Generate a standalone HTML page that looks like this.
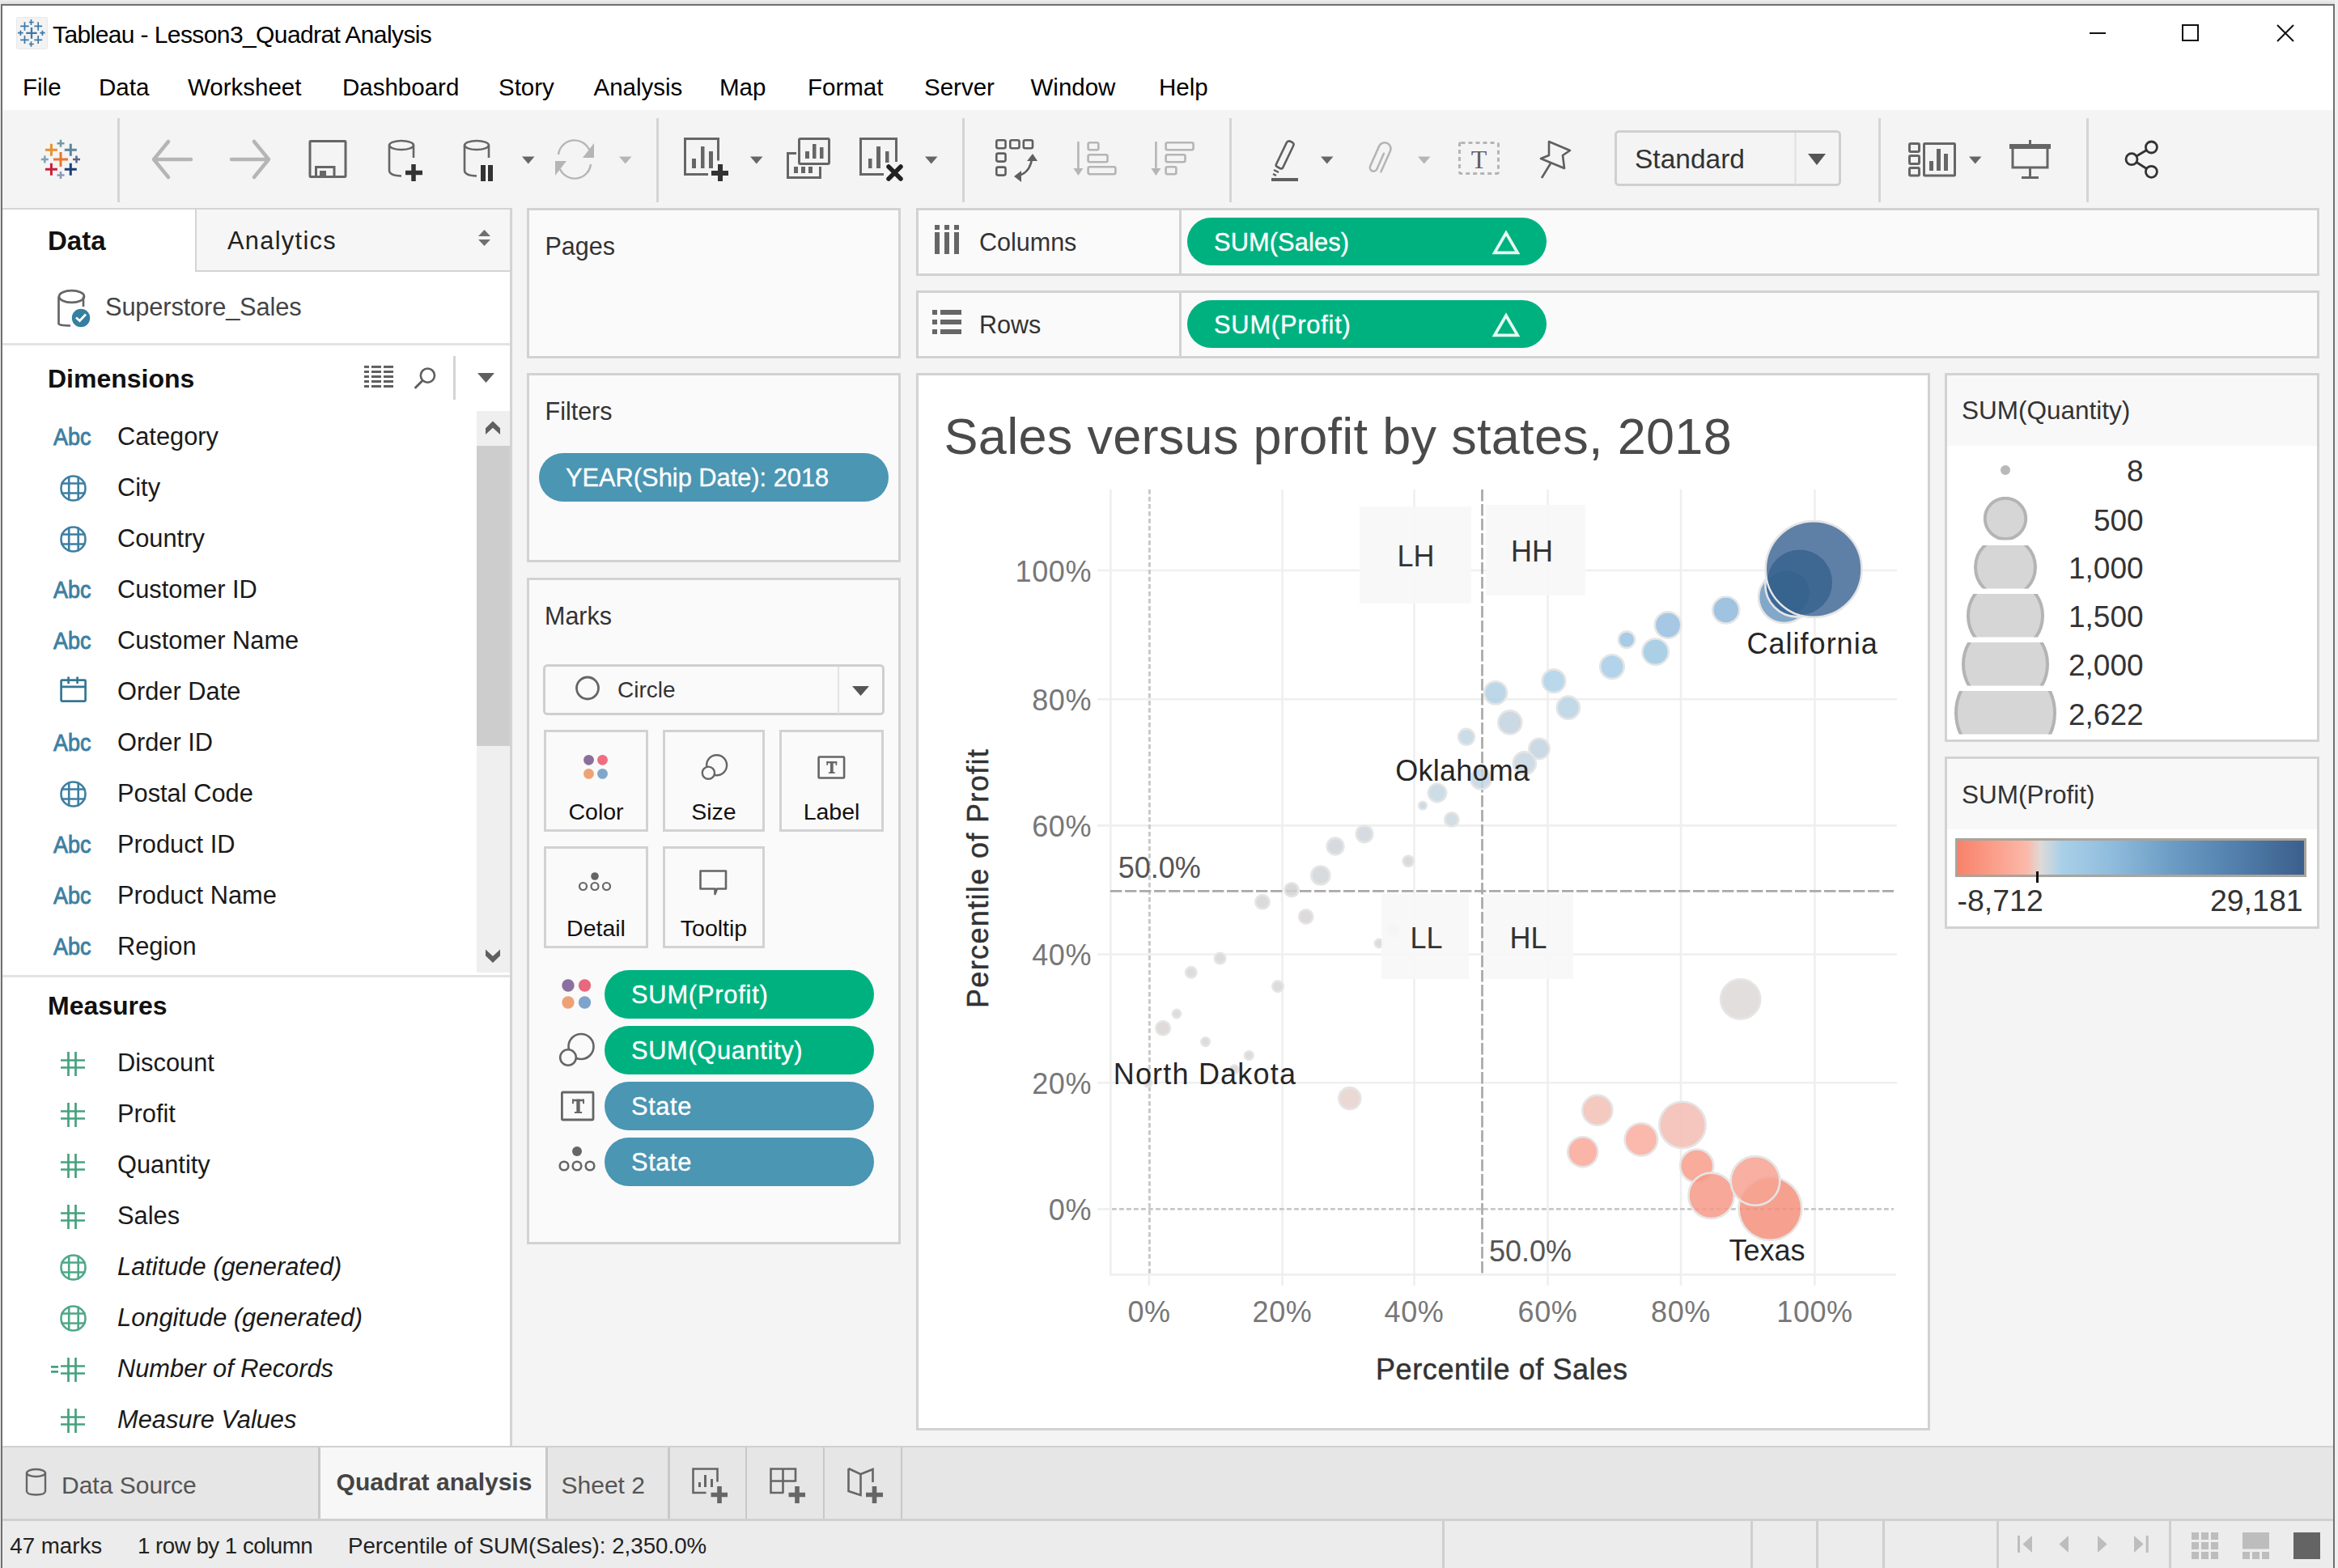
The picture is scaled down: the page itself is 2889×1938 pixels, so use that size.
<!DOCTYPE html><html><head><meta charset="utf-8"><style>
html,body{margin:0;padding:0;}
body{width:2889px;height:1938px;position:relative;overflow:hidden;font-family:"Liberation Sans", sans-serif;background:#f4f4f4;}
div,svg{position:absolute;}
</style></head><body>
<div style="position:absolute;left:0px;top:0px;width:2889px;height:5px;background:linear-gradient(#eeeeee,#dedede);"></div>
<div style="position:absolute;left:0px;top:0px;width:1px;height:1938px;background:#e8e8e8;"></div>
<div style="position:absolute;left:2885px;top:0px;width:4px;height:1938px;background:#f0f0f0;"></div>
<div style="position:absolute;left:1px;top:5px;width:2884px;height:2px;background:#707070;"></div>
<div style="position:absolute;left:1px;top:5px;width:2px;height:1933px;background:#707070;"></div>
<div style="position:absolute;left:2883px;top:5px;width:2px;height:1933px;background:#707070;"></div>
<div style="position:absolute;left:3px;top:7px;width:2880px;height:129px;background:#ffffff;"></div>
<div style="position:absolute;left:3px;top:136px;width:2880px;height:1652px;background:#f4f4f4;"></div>
<svg style="position:absolute;left:20px;top:21px;" width="39" height="40" viewBox="0 0 39 40"><rect x="0.5" y="0.5" width="38" height="39" rx="2" fill="#f3f3f3" stroke="#e8e8e8"/>
<g stroke="#3d78a8" stroke-width="1.7" fill="none">
<path d="M18.5 3v7M15.9 6.5h5.9"/>
<path d="M10.5 6.2v10.5M5.2 11.4h10.5M27.2 6.2v10.5M22.4 11.4h9.7"/>
<path d="M19 13.1v13.6M12.3 19.9h13.4" stroke-width="2.3"/>
<path d="M5.4 16.7v6.2M2 19.6h6.7M32.4 16.7v6.2M29.3 19.6h6.4"/>
<path d="M10.5 23.1v9.8M5.2 28.3h10.5M27.2 23.1v9.8M22.4 28.3h9.7"/>
<path d="M18.5 30.3v6.5M15.9 33.5h5.9"/>
</g></svg>
<div style="position:absolute;left:65px;top:27.61px;font-size:30px;line-height:30px;color:#000;font-weight:400;font-style:normal;letter-spacing:-0.6px;white-space:nowrap;">Tableau - Lesson3_Quadrat Analysis</div>
<div style="position:absolute;left:2582px;top:40px;width:20px;height:2px;background:#111;"></div>
<svg style="position:absolute;left:2696px;top:30px;" width="22" height="22" viewBox="0 0 22 22"><rect x="1" y="1" width="19" height="19" fill="none" stroke="#111" stroke-width="2"/></svg>
<svg style="position:absolute;left:2813px;top:30px;" width="22" height="22" viewBox="0 0 22 22"><path d="M1 1L21 21M21 1L1 21" stroke="#111" stroke-width="2"/></svg>
<div style="position:absolute;left:28px;top:92.53px;font-size:29.5px;line-height:29.5px;color:#000;font-weight:400;font-style:normal;white-space:nowrap;">File</div>
<div style="position:absolute;left:122px;top:92.53px;font-size:29.5px;line-height:29.5px;color:#000;font-weight:400;font-style:normal;white-space:nowrap;">Data</div>
<div style="position:absolute;left:232px;top:92.53px;font-size:29.5px;line-height:29.5px;color:#000;font-weight:400;font-style:normal;white-space:nowrap;">Worksheet</div>
<div style="position:absolute;left:423px;top:92.53px;font-size:29.5px;line-height:29.5px;color:#000;font-weight:400;font-style:normal;white-space:nowrap;">Dashboard</div>
<div style="position:absolute;left:616px;top:92.53px;font-size:29.5px;line-height:29.5px;color:#000;font-weight:400;font-style:normal;white-space:nowrap;">Story</div>
<div style="position:absolute;left:733.5px;top:92.53px;font-size:29.5px;line-height:29.5px;color:#000;font-weight:400;font-style:normal;white-space:nowrap;">Analysis</div>
<div style="position:absolute;left:889px;top:92.53px;font-size:29.5px;line-height:29.5px;color:#000;font-weight:400;font-style:normal;white-space:nowrap;">Map</div>
<div style="position:absolute;left:998px;top:92.53px;font-size:29.5px;line-height:29.5px;color:#000;font-weight:400;font-style:normal;white-space:nowrap;">Format</div>
<div style="position:absolute;left:1142px;top:92.53px;font-size:29.5px;line-height:29.5px;color:#000;font-weight:400;font-style:normal;white-space:nowrap;">Server</div>
<div style="position:absolute;left:1273.5px;top:92.53px;font-size:29.5px;line-height:29.5px;color:#000;font-weight:400;font-style:normal;white-space:nowrap;">Window</div>
<div style="position:absolute;left:1432px;top:92.53px;font-size:29.5px;line-height:29.5px;color:#000;font-weight:400;font-style:normal;white-space:nowrap;">Help</div>
<svg style="position:absolute;left:48px;top:170px;" width="54" height="54" viewBox="0 0 54 54"><path d="M27 18V36M18 27H36" stroke="#e8762d" stroke-width="3"/><path d="M15.399999999999999 7.800000000000011V22.80000000000001M7.899999999999999 15.300000000000011H22.9" stroke="#e8912d" stroke-width="3"/><path d="M39.3 7.800000000000011V22.80000000000001M31.799999999999997 15.300000000000011H46.8" stroke="#5b879b" stroke-width="3"/><path d="M15.399999999999999 31.80000000000001V46.80000000000001M7.899999999999999 39.30000000000001H22.9" stroke="#c8203a" stroke-width="3"/><path d="M39.3 31.80000000000001V46.80000000000001M31.799999999999997 39.30000000000001H46.8" stroke="#1f3f77" stroke-width="3"/><path d="M27 2.6999999999999886V11.699999999999989M22.5 7.199999999999989H31.5" stroke="#7199a8" stroke-width="2.5"/><path d="M7.299999999999997 22.5V31.5M2.799999999999997 27H11.799999999999997" stroke="#7fa2b2" stroke-width="2.5"/><path d="M46.5 22.5V31.5M42.0 27H51.0" stroke="#59628f" stroke-width="2.5"/><path d="M27 42.0V51.0M22.5 46.5H31.5" stroke="#8e97bb" stroke-width="2.5"/></svg>
<div style="position:absolute;left:144.5px;top:146px;width:3.0px;height:104px;background:#d4d4d4;"></div>
<svg style="position:absolute;left:186px;top:171px;" width="56" height="52" viewBox="0 0 56 52"><g stroke="#b5b5b5" stroke-width="4.5" fill="none" stroke-linecap="round" stroke-linejoin="round"><path d="M4 26H50M22 4L4 26L22 48"/></g></svg>
<svg style="position:absolute;left:282px;top:171px;" width="56" height="52" viewBox="0 0 56 52"><g stroke="#b5b5b5" stroke-width="4.5" fill="none" stroke-linecap="round" stroke-linejoin="round"><path d="M4 26H50M32 4L50 26L32 48"/></g></svg>
<svg style="position:absolute;left:380px;top:171px;" width="50" height="52" viewBox="0 0 50 52"><g fill="none" stroke="#666" stroke-width="3"><rect x="3" y="3.5" width="44" height="44" rx="1"/><path d="M10.5 47V35.5H33V47"/></g><rect x="15" y="40" width="8" height="8" fill="#666"/></svg>
<svg style="position:absolute;left:479px;top:172px;" width="50" height="54" viewBox="0 0 50 54"><g fill="none" stroke="#666" stroke-width="2.6"><ellipse cx="17" cy="7.5" rx="15" ry="5.5"/><path d="M2 7.5V38.5Q2 45 17 45.5"/><path d="M32 7.5V23"/></g><path d="M32 31V52M22 41.5H43" stroke="#333" stroke-width="5.5"/></svg>
<svg style="position:absolute;left:572px;top:172px;" width="50" height="54" viewBox="0 0 50 54"><g fill="none" stroke="#666" stroke-width="2.6"><ellipse cx="17" cy="7.5" rx="15" ry="5.5"/><path d="M2 7.5V38.5Q2 45 17 45.5"/><path d="M32 7.5V23"/></g><rect x="22" y="32" width="6" height="20" fill="#333"/><rect x="31" y="32" width="6" height="20" fill="#333"/></svg>
<svg style="position:absolute;left:645px;top:193px;" width="16" height="10" viewBox="0 0 16 10"><path d="M0 0.5H15.5L7.75 9.5Z" fill="#666"/></svg>
<svg style="position:absolute;left:684px;top:171px;" width="54" height="52" viewBox="0 0 54 52"><g fill="none" stroke="#b5b5b5" stroke-width="2.4"><path d="M6 20A20 20 0 0 1 44 14"/><path d="M46 32A20 20 0 0 1 8 38"/></g><path d="M50 6V24H36Z" fill="#b5b5b5"/><path d="M2 46V28H16Z" fill="#b5b5b5"/></svg>
<svg style="position:absolute;left:765px;top:193px;" width="16" height="10" viewBox="0 0 16 10"><path d="M0 0.5H15.5L7.75 9.5Z" fill="#b5b5b5"/></svg>
<div style="position:absolute;left:810.5px;top:146px;width:3.0px;height:104px;background:#d4d4d4;"></div>
<svg style="position:absolute;left:843px;top:168px;" width="60" height="60" viewBox="0 0 60 60"><g fill="none" stroke="#666" stroke-width="3"><path d="M44.5 30.5V3.5H3.5V47.5H32"/></g>
<rect x="12" y="28" width="5" height="12" fill="#666"/><rect x="23" y="13" width="4.5" height="27" fill="#666"/><rect x="33" y="19" width="5" height="21" fill="#666"/>
<path d="M47 35V56M36 46H57" stroke="#333" stroke-width="6"/></svg>
<svg style="position:absolute;left:927px;top:193px;" width="16" height="10" viewBox="0 0 16 10"><path d="M0 0.5H15.5L7.75 9.5Z" fill="#666"/></svg>
<svg style="position:absolute;left:970px;top:168px;" width="60" height="60" viewBox="0 0 60 60"><g fill="none" stroke="#666" stroke-width="3"><rect x="17.5" y="3.5" width="37" height="31" rx="1.5"/><path d="M14 21.5H3.5V51.5H43.5V38"/></g>
<rect x="25" y="19" width="5" height="9" fill="#666"/><rect x="34" y="10" width="4.5" height="18" fill="#666"/><rect x="43" y="14" width="4.5" height="14" fill="#666"/>
<rect x="11" y="38" width="5" height="8" fill="#666"/><rect x="20" y="38" width="5" height="8" fill="#666"/><rect x="29" y="38" width="5" height="8" fill="#666"/></svg>
<svg style="position:absolute;left:1060px;top:168px;" width="60" height="60" viewBox="0 0 60 60"><g fill="none" stroke="#666" stroke-width="3"><path d="M47.5 32V3.5H3.5V47.5H32"/></g>
<rect x="13" y="28" width="4.5" height="12" fill="#666"/><rect x="23" y="13" width="5" height="27" fill="#666"/><rect x="34" y="19" width="4.5" height="14" fill="#666"/>
<path d="M38 38L53 53M53 38L38 53" stroke="#222" stroke-width="5.5" stroke-linecap="round"/></svg>
<svg style="position:absolute;left:1143px;top:193px;" width="16" height="10" viewBox="0 0 16 10"><path d="M0 0.5H15.5L7.75 9.5Z" fill="#666"/></svg>
<div style="position:absolute;left:1188.5px;top:146px;width:3.0px;height:104px;background:#d4d4d4;"></div>
<svg style="position:absolute;left:1228px;top:170px;" width="58" height="58" viewBox="0 0 58 58"><g fill="none" stroke="#5f5f5f" stroke-width="2.6"><rect x="3.3" y="3.3" width="11.2" height="10" rx="2"/><rect x="20.3" y="3.3" width="11.2" height="10" rx="2"/><rect x="36.8" y="3.3" width="11.2" height="10" rx="2"/><rect x="3.3" y="19.600000000000012" width="11.2" height="10" rx="2"/><rect x="3.3" y="36.60000000000001" width="11.2" height="10" rx="2"/><path d="M30 47Q44 44 47 27" stroke-width="2.6"/></g><path d="M48 20L54 29H41Z" fill="#5f5f5f"/><path d="M25 48L34 41V55Z" fill="#5f5f5f"/></svg>
<svg style="position:absolute;left:1326px;top:170px;" width="58" height="52" viewBox="0 0 58 52"><g fill="none" stroke="#b5b5b5" stroke-width="2.6"><path d="M6.4 5V40"/><rect x="18.599999999999955" y="6.3" width="12.700000000000001" height="9" rx="2"/><rect x="18.599999999999955" y="21.3" width="23.9" height="9" rx="2"/><rect x="18.599999999999955" y="36.3" width="33.8" height="9" rx="2"/></g><path d="M0.4 38H12.4L6.4 47Z" fill="#b5b5b5"/></svg>
<svg style="position:absolute;left:1422px;top:170px;" width="58" height="52" viewBox="0 0 58 52"><g fill="none" stroke="#b5b5b5" stroke-width="2.6"><path d="M6.4 5V40"/><rect x="18.599999999999955" y="6.3" width="34.0" height="9" rx="2"/><rect x="18.599999999999955" y="21.3" width="23.9" height="9" rx="2"/><rect x="18.599999999999955" y="36.3" width="12.8" height="9" rx="2"/></g><path d="M0.4 38H12.4L6.4 47Z" fill="#b5b5b5"/></svg>
<div style="position:absolute;left:1518.5px;top:146px;width:3.0px;height:104px;background:#d4d4d4;"></div>
<svg style="position:absolute;left:1568px;top:170px;" width="40" height="58" viewBox="0 0 40 58"><g fill="none" stroke="#5f5f5f" stroke-width="2.6"><path d="M9 33L22 6Q24 3.5 27 5L29 6Q31.5 7.5 30 10.5L17 37.5Q16 39 13.5 38L10 36Q8 35 9 33Z"/></g>
<path d="M6 40L12 43M5 45L9 47" stroke="#5f5f5f" stroke-width="2.5"/><rect x="3" y="50" width="33" height="4" fill="#5f5f5f"/></svg>
<svg style="position:absolute;left:1632px;top:193px;" width="16" height="10" viewBox="0 0 16 10"><path d="M0 0.5H15.5L7.75 9.5Z" fill="#666"/></svg>
<svg style="position:absolute;left:1683px;top:172px;" width="42" height="50" viewBox="0 0 42 50"><g transform="translate(21 25) rotate(24)" fill="none" stroke="#b5b5b5" stroke-width="2.6" stroke-linecap="round"><path d="M2.5 -9V12A4.5 4.5 0 0 1 -6.5 12V-15A7.5 7.5 0 0 1 8.5 -15V13"/></g></svg>
<svg style="position:absolute;left:1752px;top:193px;" width="16" height="10" viewBox="0 0 16 10"><path d="M0 0.5H15.5L7.75 9.5Z" fill="#b5b5b5"/></svg>
<svg style="position:absolute;left:1800px;top:173px;" width="55" height="46" viewBox="0 0 55 46"><rect x="3.5" y="3.5" width="48" height="38" rx="2" fill="none" stroke="#b5b5b5" stroke-width="3" stroke-dasharray="5 4"/>
<text x="27.5" y="35" font-family="Liberation Serif" font-size="32" fill="#5f5f5f" text-anchor="middle">T</text></svg>
<svg style="position:absolute;left:1900px;top:172px;" width="44" height="52" viewBox="0 0 44 52"><g fill="none" stroke="#5f5f5f" stroke-width="2.6" stroke-linejoin="round"><path d="M14 3L40 14L31 20L33 36L4 24L14 20Z"/><path d="M16 30L5 48"/></g></svg>
<svg style="position:absolute;left:1995px;top:161px;" width="280" height="70" viewBox="0 0 280 70"><rect x="1.5" y="1.5" width="277" height="66" rx="4" fill="#f4f4f4" stroke="#cfcfcf" stroke-width="3"/><rect x="222.5" y="3" width="2" height="64" fill="#e0e0e0"/><path d="M239 29H261L250 43Z" fill="#555"/></svg>
<div style="position:absolute;left:2020px;top:179.64px;font-size:33.5px;line-height:33.5px;color:#333;font-weight:400;font-style:normal;white-space:nowrap;">Standard</div>
<div style="position:absolute;left:2320.5px;top:146px;width:3.0px;height:104px;background:#d4d4d4;"></div>
<svg style="position:absolute;left:2356px;top:174px;" width="64" height="46" viewBox="0 0 64 46"><g fill="none" stroke="#666" stroke-width="3"><rect x="3.5" y="3.5" width="12" height="10" rx="1.5"/><rect x="3.5" y="18.5" width="12" height="10" rx="1.5"/><rect x="3.5" y="33.5" width="12" height="9.5" rx="1.5"/><rect x="21.5" y="3.5" width="38" height="39.5" rx="1"/></g>
<rect x="28" y="25" width="5" height="12" fill="#666"/><rect x="37" y="10" width="5" height="27" fill="#666"/><rect x="46" y="16" width="5" height="21" fill="#666"/></svg>
<svg style="position:absolute;left:2433px;top:193px;" width="16" height="10" viewBox="0 0 16 10"><path d="M0 0.5H15.5L7.75 9.5Z" fill="#666"/></svg>
<svg style="position:absolute;left:2481px;top:171px;" width="56" height="52" viewBox="0 0 56 52"><rect x="2" y="7" width="51" height="6" fill="#666"/><rect x="26" y="2" width="3" height="6" fill="#666"/>
<path d="M6 13V36H49V13" fill="none" stroke="#666" stroke-width="3"/><rect x="26" y="36" width="3" height="13" fill="#666"/><rect x="17" y="47" width="21" height="3" fill="#666"/></svg>
<div style="position:absolute;left:2577.5px;top:146px;width:3.0px;height:104px;background:#d4d4d4;"></div>
<svg style="position:absolute;left:2622px;top:170px;" width="50" height="54" viewBox="0 0 50 54"><g fill="none" stroke="#333" stroke-width="2.8"><circle cx="36.4" cy="12" r="7"/><circle cx="12" cy="26.7" r="7"/><circle cx="36.4" cy="42.3" r="7"/><path d="M18 23L30.5 15.5M18 30.5L30.5 38.5"/></g></svg>
<div style="position:absolute;left:3px;top:257px;width:630px;height:1530px;background:#ffffff;"></div>
<div style="position:absolute;left:3px;top:257px;width:630px;height:2px;background:#d4d4d4;"></div>
<div style="position:absolute;left:630px;top:257px;width:3px;height:1530px;background:#d4d4d4;"></div>
<div style="position:absolute;left:241px;top:259px;width:389px;height:77px;background:#f6f6f6;"></div>
<div style="position:absolute;left:241px;top:259px;width:2px;height:77px;background:#d4d4d4;"></div>
<div style="position:absolute;left:241px;top:334px;width:389px;height:2px;background:#d4d4d4;"></div>
<div style="position:absolute;left:59px;top:281.07px;font-size:33px;line-height:33px;color:#111;font-weight:700;font-style:normal;white-space:nowrap;">Data</div>
<div style="position:absolute;left:281px;top:282.93px;font-size:30.8px;line-height:30.8px;color:#222;font-weight:400;font-style:normal;letter-spacing:1.3px;white-space:nowrap;">Analytics</div>
<svg style="position:absolute;left:589px;top:282px;" width="20" height="26" viewBox="0 0 20 26"><path d="M2 10L9.5 2L17 10Z" fill="#707070"/><path d="M2 14L9.5 22L17 14Z" fill="#707070"/></svg>
<svg style="position:absolute;left:68px;top:355px;" width="48" height="52" viewBox="0 0 48 52"><g fill="none" stroke="#666" stroke-width="2.7"><ellipse cx="20.5" cy="11.5" rx="15.5" ry="7.3"/><path d="M4.5 11.5V45Q4.5 47.5 19 47.5"/><path d="M35 11.5V24"/></g>
<circle cx="32" cy="38" r="11.2" fill="#357fa0"/><path d="M26 37.5L30.5 41.5L38 33.5" fill="none" stroke="#fff" stroke-width="2.8"/></svg>
<div style="position:absolute;left:130px;top:364.93px;font-size:30.8px;line-height:30.8px;color:#444;font-weight:400;font-style:normal;letter-spacing:-0.15px;white-space:nowrap;">Superstore_Sales</div>
<div style="position:absolute;left:3px;top:424px;width:627px;height:3px;background:#e3e3e3;"></div>
<div style="position:absolute;left:59px;top:451.61px;font-size:32px;line-height:32px;color:#111;font-weight:700;font-style:normal;white-space:nowrap;">Dimensions</div>
<svg style="position:absolute;left:450px;top:450px;" width="40" height="32" viewBox="0 0 40 32"><rect x="0" y="1.9" width="6" height="3" fill="#5f5f5f"/><rect x="9" y="1.9" width="12" height="3" fill="#5f5f5f"/><rect x="24" y="1.9" width="12" height="3" fill="#5f5f5f"/><rect x="0" y="8.0" width="6" height="3" fill="#5f5f5f"/><rect x="9" y="8.0" width="12" height="3" fill="#5f5f5f"/><rect x="24" y="8.0" width="12" height="3" fill="#5f5f5f"/><rect x="0" y="14.0" width="6" height="3" fill="#5f5f5f"/><rect x="9" y="14.0" width="12" height="3" fill="#5f5f5f"/><rect x="24" y="14.0" width="12" height="3" fill="#5f5f5f"/><rect x="0" y="20.0" width="6" height="3" fill="#5f5f5f"/><rect x="9" y="20.0" width="12" height="3" fill="#5f5f5f"/><rect x="24" y="20.0" width="12" height="3" fill="#5f5f5f"/><rect x="0" y="26.0" width="6" height="3" fill="#5f5f5f"/><rect x="9" y="26.0" width="12" height="3" fill="#5f5f5f"/><rect x="24" y="26.0" width="12" height="3" fill="#5f5f5f"/></svg>
<svg style="position:absolute;left:508px;top:452px;" width="32" height="32" viewBox="0 0 32 32"><circle cx="20.4" cy="12.1" r="8.6" fill="none" stroke="#5f5f5f" stroke-width="2.6"/><path d="M13.5 19L5.5 27" stroke="#5f5f5f" stroke-width="3" stroke-linecap="round"/></svg>
<div style="position:absolute;left:560px;top:440px;width:3px;height:54px;background:#d4d4d4;"></div>
<svg style="position:absolute;left:589px;top:460px;" width="24" height="14" viewBox="0 0 24 14"><path d="M1 1H22L11.5 13Z" fill="#5f5f5f"/></svg>
<div style="position:absolute;left:66px;top:526.45px;font-size:29px;line-height:29px;color:#3d7fa2;font-weight:400;font-style:normal;white-space:nowrap;transform:scaleX(0.93);transform-origin:left;-webkit-text-stroke:0.9px #3d7fa2;">Abc</div>
<div style="position:absolute;left:145px;top:524.93px;font-size:30.8px;line-height:30.8px;color:#1a1a1a;font-weight:400;font-style:normal;white-space:nowrap;">Category</div>
<svg style="position:absolute;left:72px;top:585px;" width="38" height="38" viewBox="0 0 38 38"><g fill="none" stroke="#3d7fa2" stroke-width="2.6"><circle cx="18.5" cy="18.5" r="15"/><path d="M13.2 3.5V33.5M24.7 3.5V33.5M3.5 12.5H33.5M3.5 24.5H33.5"/></g></svg>
<div style="position:absolute;left:145px;top:587.93px;font-size:30.8px;line-height:30.8px;color:#1a1a1a;font-weight:400;font-style:normal;white-space:nowrap;">City</div>
<svg style="position:absolute;left:72px;top:648px;" width="38" height="38" viewBox="0 0 38 38"><g fill="none" stroke="#3d7fa2" stroke-width="2.6"><circle cx="18.5" cy="18.5" r="15"/><path d="M13.2 3.5V33.5M24.7 3.5V33.5M3.5 12.5H33.5M3.5 24.5H33.5"/></g></svg>
<div style="position:absolute;left:145px;top:650.93px;font-size:30.8px;line-height:30.8px;color:#1a1a1a;font-weight:400;font-style:normal;white-space:nowrap;">Country</div>
<div style="position:absolute;left:66px;top:715.45px;font-size:29px;line-height:29px;color:#3d7fa2;font-weight:400;font-style:normal;white-space:nowrap;transform:scaleX(0.93);transform-origin:left;-webkit-text-stroke:0.9px #3d7fa2;">Abc</div>
<div style="position:absolute;left:145px;top:713.93px;font-size:30.8px;line-height:30.8px;color:#1a1a1a;font-weight:400;font-style:normal;white-space:nowrap;">Customer ID</div>
<div style="position:absolute;left:66px;top:778.45px;font-size:29px;line-height:29px;color:#3d7fa2;font-weight:400;font-style:normal;white-space:nowrap;transform:scaleX(0.93);transform-origin:left;-webkit-text-stroke:0.9px #3d7fa2;">Abc</div>
<div style="position:absolute;left:145px;top:776.93px;font-size:30.8px;line-height:30.8px;color:#1a1a1a;font-weight:400;font-style:normal;white-space:nowrap;">Customer Name</div>
<svg style="position:absolute;left:72px;top:836px;" width="38" height="36" viewBox="0 0 38 36"><g fill="none" stroke="#357795" stroke-width="2.7"><rect x="3.6" y="4.6" width="30" height="26" rx="1"/><path d="M3.6 12.9H33.6M12.6 0.5V9M23.6 0.5V9"/></g></svg>
<div style="position:absolute;left:145px;top:839.93px;font-size:30.8px;line-height:30.8px;color:#1a1a1a;font-weight:400;font-style:normal;white-space:nowrap;">Order Date</div>
<div style="position:absolute;left:66px;top:904.45px;font-size:29px;line-height:29px;color:#3d7fa2;font-weight:400;font-style:normal;white-space:nowrap;transform:scaleX(0.93);transform-origin:left;-webkit-text-stroke:0.9px #3d7fa2;">Abc</div>
<div style="position:absolute;left:145px;top:902.93px;font-size:30.8px;line-height:30.8px;color:#1a1a1a;font-weight:400;font-style:normal;white-space:nowrap;">Order ID</div>
<svg style="position:absolute;left:72px;top:963px;" width="38" height="38" viewBox="0 0 38 38"><g fill="none" stroke="#3d7fa2" stroke-width="2.6"><circle cx="18.5" cy="18.5" r="15"/><path d="M13.2 3.5V33.5M24.7 3.5V33.5M3.5 12.5H33.5M3.5 24.5H33.5"/></g></svg>
<div style="position:absolute;left:145px;top:965.93px;font-size:30.8px;line-height:30.8px;color:#1a1a1a;font-weight:400;font-style:normal;white-space:nowrap;">Postal Code</div>
<div style="position:absolute;left:66px;top:1030.45px;font-size:29px;line-height:29px;color:#3d7fa2;font-weight:400;font-style:normal;white-space:nowrap;transform:scaleX(0.93);transform-origin:left;-webkit-text-stroke:0.9px #3d7fa2;">Abc</div>
<div style="position:absolute;left:145px;top:1028.93px;font-size:30.8px;line-height:30.8px;color:#1a1a1a;font-weight:400;font-style:normal;white-space:nowrap;">Product ID</div>
<div style="position:absolute;left:66px;top:1093.45px;font-size:29px;line-height:29px;color:#3d7fa2;font-weight:400;font-style:normal;white-space:nowrap;transform:scaleX(0.93);transform-origin:left;-webkit-text-stroke:0.9px #3d7fa2;">Abc</div>
<div style="position:absolute;left:145px;top:1091.93px;font-size:30.8px;line-height:30.8px;color:#1a1a1a;font-weight:400;font-style:normal;white-space:nowrap;">Product Name</div>
<div style="position:absolute;left:66px;top:1156.45px;font-size:29px;line-height:29px;color:#3d7fa2;font-weight:400;font-style:normal;white-space:nowrap;transform:scaleX(0.93);transform-origin:left;-webkit-text-stroke:0.9px #3d7fa2;">Abc</div>
<div style="position:absolute;left:145px;top:1154.93px;font-size:30.8px;line-height:30.8px;color:#1a1a1a;font-weight:400;font-style:normal;white-space:nowrap;">Region</div>
<div style="position:absolute;left:589px;top:508px;width:41px;height:694px;background:#efefef;"></div>
<div style="position:absolute;left:589px;top:551px;width:41px;height:371px;background:#cdcdcd;"></div>
<svg style="position:absolute;left:598px;top:518px;" width="22" height="22" viewBox="0 0 22 22"><path d="M2 11.3L11 2.6L20 11.3V19L11 10.8L2 19Z" fill="#5f5f5f"/></svg>
<svg style="position:absolute;left:598px;top:1170px;" width="22" height="22" viewBox="0 0 22 22"><path d="M2 3.5L11 11.7L20 3.5V11.2L11 19.9L2 11.2Z" fill="#5f5f5f"/></svg>
<div style="position:absolute;left:3px;top:1205px;width:627px;height:3px;background:#e3e3e3;"></div>
<div style="position:absolute;left:59px;top:1226.91px;font-size:32px;line-height:32px;color:#111;font-weight:700;font-style:normal;white-space:nowrap;">Measures</div>
<svg style="position:absolute;left:74px;top:1300px;" width="34" height="32" viewBox="0 0 34 32"><g stroke="#45a27f" stroke-width="2.7"><path d="M10.5 0V30M19.5 0V30M1 10.5H31M1 19.5H31"/></g></svg>
<div style="position:absolute;left:145px;top:1298.93px;font-size:30.8px;line-height:30.8px;color:#1a1a1a;font-weight:400;font-style:normal;white-space:nowrap;">Discount</div>
<svg style="position:absolute;left:74px;top:1363px;" width="34" height="32" viewBox="0 0 34 32"><g stroke="#45a27f" stroke-width="2.7"><path d="M10.5 0V30M19.5 0V30M1 10.5H31M1 19.5H31"/></g></svg>
<div style="position:absolute;left:145px;top:1361.93px;font-size:30.8px;line-height:30.8px;color:#1a1a1a;font-weight:400;font-style:normal;white-space:nowrap;">Profit</div>
<svg style="position:absolute;left:74px;top:1426px;" width="34" height="32" viewBox="0 0 34 32"><g stroke="#45a27f" stroke-width="2.7"><path d="M10.5 0V30M19.5 0V30M1 10.5H31M1 19.5H31"/></g></svg>
<div style="position:absolute;left:145px;top:1424.93px;font-size:30.8px;line-height:30.8px;color:#1a1a1a;font-weight:400;font-style:normal;white-space:nowrap;">Quantity</div>
<svg style="position:absolute;left:74px;top:1489px;" width="34" height="32" viewBox="0 0 34 32"><g stroke="#45a27f" stroke-width="2.7"><path d="M10.5 0V30M19.5 0V30M1 10.5H31M1 19.5H31"/></g></svg>
<div style="position:absolute;left:145px;top:1487.93px;font-size:30.8px;line-height:30.8px;color:#1a1a1a;font-weight:400;font-style:normal;white-space:nowrap;">Sales</div>
<svg style="position:absolute;left:72px;top:1548px;" width="38" height="38" viewBox="0 0 38 38"><g fill="none" stroke="#4fa888" stroke-width="2.6"><circle cx="18.5" cy="18.5" r="15"/><path d="M13.2 3.5V33.5M24.7 3.5V33.5M3.5 12.5H33.5M3.5 24.5H33.5"/></g></svg>
<div style="position:absolute;left:145px;top:1550.93px;font-size:30.8px;line-height:30.8px;color:#1a1a1a;font-weight:400;font-style:italic;white-space:nowrap;">Latitude (generated)</div>
<svg style="position:absolute;left:72px;top:1611px;" width="38" height="38" viewBox="0 0 38 38"><g fill="none" stroke="#4fa888" stroke-width="2.6"><circle cx="18.5" cy="18.5" r="15"/><path d="M13.2 3.5V33.5M24.7 3.5V33.5M3.5 12.5H33.5M3.5 24.5H33.5"/></g></svg>
<div style="position:absolute;left:145px;top:1613.93px;font-size:30.8px;line-height:30.8px;color:#1a1a1a;font-weight:400;font-style:italic;white-space:nowrap;">Longitude (generated)</div>
<svg style="position:absolute;left:74px;top:1678px;" width="34" height="32" viewBox="0 0 34 32"><g stroke="#45a27f" stroke-width="2.7"><path d="M10.5 0V30M19.5 0V30M1 10.5H31M1 19.5H31"/></g></svg>
<svg style="position:absolute;left:62px;top:1678px;" width="12" height="32" viewBox="0 0 12 32"><rect x="1" y="10" width="9" height="2.8" fill="#45a27f"/><rect x="1" y="16" width="9" height="2.8" fill="#45a27f"/></svg>
<div style="position:absolute;left:145px;top:1676.93px;font-size:30.8px;line-height:30.8px;color:#1a1a1a;font-weight:400;font-style:italic;white-space:nowrap;">Number of Records</div>
<svg style="position:absolute;left:74px;top:1741px;" width="34" height="32" viewBox="0 0 34 32"><g stroke="#45a27f" stroke-width="2.7"><path d="M10.5 0V30M19.5 0V30M1 10.5H31M1 19.5H31"/></g></svg>
<div style="position:absolute;left:145px;top:1739.93px;font-size:30.8px;line-height:30.8px;color:#1a1a1a;font-weight:400;font-style:italic;white-space:nowrap;">Measure Values</div>
<div style="position:absolute;left:651px;top:257px;width:462px;height:186px;background:#fafafa;border:3px solid #d2d2d2;box-sizing:border-box;"></div>
<div style="position:absolute;left:673.5px;top:289.18px;font-size:30.5px;line-height:30.5px;color:#333;font-weight:400;font-style:normal;white-space:nowrap;">Pages</div>
<div style="position:absolute;left:651px;top:461px;width:462px;height:234px;background:#fafafa;border:3px solid #d2d2d2;box-sizing:border-box;"></div>
<div style="position:absolute;left:673.5px;top:493.18px;font-size:30.5px;line-height:30.5px;color:#333;font-weight:400;font-style:normal;white-space:nowrap;">Filters</div>
<div style="position:absolute;left:666px;top:560px;width:432px;height:60px;background:#4a96b3;border-radius:30.0px;"></div>
<div style="position:absolute;left:699px;top:575.93px;font-size:30.8px;line-height:30.8px;color:#fff;font-weight:400;font-style:normal;white-space:nowrap;-webkit-text-stroke:0.35px #fff;">YEAR(Ship Date): 2018</div>
<div style="position:absolute;left:651px;top:714px;width:462px;height:824px;background:#fafafa;border:3px solid #d2d2d2;box-sizing:border-box;"></div>
<div style="position:absolute;left:673px;top:746.18px;font-size:30.5px;line-height:30.5px;color:#333;font-weight:400;font-style:normal;white-space:nowrap;">Marks</div>
<svg style="position:absolute;left:671px;top:821px;" width="422" height="64" viewBox="0 0 422 64"><rect x="1.5" y="1.5" width="419" height="60" rx="4" fill="#fafafa" stroke="#cfcfcf" stroke-width="3"/><rect x="364" y="3" width="2" height="58" fill="#e2e2e2"/><path d="M382 27H403L392.5 39Z" fill="#555"/><circle cx="55" cy="29.5" r="13.5" fill="none" stroke="#666" stroke-width="2.8"/></svg>
<div style="position:absolute;left:763px;top:839.30px;font-size:28px;line-height:28px;color:#333;font-weight:400;font-style:normal;white-space:nowrap;">Circle</div>
<div style="position:absolute;left:672px;top:902px;width:129px;height:126px;background:#fafafa;border:3px solid #d2d2d2;box-sizing:border-box;"></div>
<div style="position:absolute;left:736.5px;transform:translateX(-50%);top:989.37px;font-size:28.5px;line-height:28.5px;color:#111;font-weight:400;font-style:normal;white-space:nowrap;">Color</div>

<svg style="position:absolute;left:716px;top:928px;" width="40" height="40" viewBox="0 0 40 40"><circle cx="11.5" cy="11.3" r="6.4" fill="#8a6f9c"/><circle cx="28.5" cy="11.3" r="6.4" fill="#f06c80"/><circle cx="11.5" cy="28.4" r="6.4" fill="#eea375"/><circle cx="28.5" cy="28.4" r="6.4" fill="#80a6cc"/></svg>
<div style="position:absolute;left:819px;top:902px;width:126px;height:126px;background:#fafafa;border:3px solid #d2d2d2;box-sizing:border-box;"></div>
<div style="position:absolute;left:882.0px;transform:translateX(-50%);top:989.37px;font-size:28.5px;line-height:28.5px;color:#111;font-weight:400;font-style:normal;white-space:nowrap;">Size</div>

<svg style="position:absolute;left:862px;top:925px;" width="40" height="42" viewBox="0 0 40 42"><g fill="none" stroke="#666" stroke-width="2.4"><circle cx="23.6" cy="20.8" r="12.5"/><circle cx="13.4" cy="30.2" r="7.6" fill="#fafafa"/></g></svg>
<div style="position:absolute;left:963px;top:902px;width:129px;height:126px;background:#fafafa;border:3px solid #d2d2d2;box-sizing:border-box;"></div>
<div style="position:absolute;left:1027.5px;transform:translateX(-50%);top:989.37px;font-size:28.5px;line-height:28.5px;color:#111;font-weight:400;font-style:normal;white-space:nowrap;">Label</div>

<svg style="position:absolute;left:1008px;top:932px;" width="40" height="34" viewBox="0 0 40 34"><rect x="3.6" y="3.5" width="31.5" height="26" rx="1" fill="none" stroke="#666" stroke-width="2.6"/><rect x="13.4" y="9.1" width="12.8" height="2.22" fill="#666"/><rect x="13.4" y="9.1" width="1.6640000000000001" height="4.736000000000001" fill="#666"/><rect x="24.536" y="9.1" width="1.6640000000000001" height="4.736000000000001" fill="#666"/><rect x="17.944000000000003" y="9.1" width="3.7119999999999997" height="14.8" fill="#666"/><rect x="15.832" y="22.272" width="7.936" height="1.6280000000000001" fill="#666"/></svg>
<div style="position:absolute;left:672px;top:1046px;width:129px;height:126px;background:#fafafa;border:3px solid #d2d2d2;box-sizing:border-box;"></div>
<div style="position:absolute;left:736.5px;transform:translateX(-50%);top:1133.37px;font-size:28.5px;line-height:28.5px;color:#111;font-weight:400;font-style:normal;white-space:nowrap;">Detail</div>

<svg style="position:absolute;left:713px;top:1078px;" width="44" height="26" viewBox="0 0 44 26"><circle cx="22" cy="5" r="4.8" fill="#666"/><g fill="none" stroke="#666" stroke-width="2.2"><circle cx="7.5" cy="17.5" r="4.5"/><circle cx="22" cy="17.5" r="4.5"/><circle cx="36.5" cy="17.5" r="4.5"/></g></svg>
<div style="position:absolute;left:819px;top:1046px;width:126px;height:126px;background:#fafafa;border:3px solid #d2d2d2;box-sizing:border-box;"></div>
<div style="position:absolute;left:882.0px;transform:translateX(-50%);top:1133.37px;font-size:28.5px;line-height:28.5px;color:#111;font-weight:400;font-style:normal;white-space:nowrap;">Tooltip</div>

<svg style="position:absolute;left:862px;top:1072px;" width="40" height="40" viewBox="0 0 40 40"><path d="M3.5 4.5H35V26.5H24L21.5 33V26.5H3.5Z" fill="none" stroke="#666" stroke-width="2.6" stroke-linejoin="round"/></svg>
<div style="position:absolute;left:747px;top:1199px;width:333px;height:60px;background:#00b180;border-radius:30.0px;"></div>
<div style="position:absolute;left:780px;top:1214.93px;font-size:30.8px;line-height:30.8px;color:#fff;font-weight:400;font-style:normal;letter-spacing:0.8px;white-space:nowrap;-webkit-text-stroke:0.35px #fff;">SUM(Profit)</div>
<svg style="position:absolute;left:691px;top:1208px;" width="44" height="42" viewBox="0 0 44 42"><circle cx="11" cy="10" r="7.7" fill="#8a70a0"/><circle cx="31.5" cy="10" r="7.7" fill="#e8697e"/><circle cx="11" cy="31" r="7.7" fill="#eca276"/><circle cx="31.5" cy="31" r="7.7" fill="#7ea4cc"/></svg>
<div style="position:absolute;left:747px;top:1268px;width:333px;height:60px;background:#00b180;border-radius:30.0px;"></div>
<div style="position:absolute;left:780px;top:1283.93px;font-size:30.8px;line-height:30.8px;color:#fff;font-weight:400;font-style:normal;letter-spacing:0.65px;white-space:nowrap;-webkit-text-stroke:0.35px #fff;">SUM(Quantity)</div>
<svg style="position:absolute;left:690px;top:1275px;" width="48" height="48" viewBox="0 0 48 48"><g fill="none" stroke="#666" stroke-width="2.6"><circle cx="28" cy="18.5" r="15.5"/><circle cx="12" cy="32" r="9.8" fill="#fafafa"/></g></svg>
<div style="position:absolute;left:747px;top:1337px;width:333px;height:60px;background:#4a96b3;border-radius:30.0px;"></div>
<div style="position:absolute;left:780px;top:1352.93px;font-size:30.8px;line-height:30.8px;color:#fff;font-weight:400;font-style:normal;letter-spacing:0.6px;white-space:nowrap;-webkit-text-stroke:0.35px #fff;">State</div>
<svg style="position:absolute;left:691px;top:1347px;" width="46" height="40" viewBox="0 0 46 40"><rect x="3.4" y="3" width="38.6" height="34" rx="1" fill="none" stroke="#666" stroke-width="2.8"/><rect x="16" y="11.6" width="15" height="2.61" fill="#666"/><rect x="16" y="11.6" width="1.9500000000000002" height="5.568" fill="#666"/><rect x="29.05" y="11.6" width="1.9500000000000002" height="5.568" fill="#666"/><rect x="21.325" y="11.6" width="4.35" height="17.4" fill="#666"/><rect x="18.85" y="27.086" width="9.3" height="1.914" fill="#666"/></svg>
<div style="position:absolute;left:747px;top:1406px;width:333px;height:60px;background:#4a96b3;border-radius:30.0px;"></div>
<div style="position:absolute;left:780px;top:1421.93px;font-size:30.8px;line-height:30.8px;color:#fff;font-weight:400;font-style:normal;letter-spacing:0.6px;white-space:nowrap;-webkit-text-stroke:0.35px #fff;">State</div>
<svg style="position:absolute;left:689px;top:1416px;" width="50" height="40" viewBox="0 0 50 40"><circle cx="24" cy="7" r="6" fill="#666"/><g fill="none" stroke="#666" stroke-width="2.6"><circle cx="8" cy="25" r="5.3"/><circle cx="24" cy="25" r="5.3"/><circle cx="40" cy="25" r="5.3"/></g></svg>
<div style="position:absolute;left:1132px;top:257px;width:1734px;height:84px;background:#fafafa;border:3px solid #d2d2d2;box-sizing:border-box;"></div>
<div style="position:absolute;left:1457px;top:257px;width:3px;height:84px;background:#d2d2d2;"></div>
<div style="position:absolute;left:1210px;top:284.18px;font-size:30.5px;line-height:30.5px;color:#333;font-weight:400;font-style:normal;white-space:nowrap;">Columns</div>
<div style="position:absolute;left:1467px;top:269px;width:444px;height:59px;background:#00b180;border-radius:29.5px;"></div>
<div style="position:absolute;left:1500px;top:284.93px;font-size:30.8px;line-height:30.8px;color:#fff;font-weight:400;font-style:normal;letter-spacing:0.1px;white-space:nowrap;-webkit-text-stroke:0.35px #fff;">SUM(Sales)</div>
<svg style="position:absolute;left:1843px;top:283px;" width="36" height="34" viewBox="0 0 36 34"><path d="M18 5L32.2 29.3H3.8Z" fill="none" stroke="#e4faf1" stroke-width="3.7" stroke-linejoin="miter"/></svg>
<div style="position:absolute;left:1132px;top:359px;width:1734px;height:84px;background:#fafafa;border:3px solid #d2d2d2;box-sizing:border-box;"></div>
<div style="position:absolute;left:1457px;top:359px;width:3px;height:84px;background:#d2d2d2;"></div>
<div style="position:absolute;left:1210px;top:386.18px;font-size:30.5px;line-height:30.5px;color:#333;font-weight:400;font-style:normal;white-space:nowrap;">Rows</div>
<div style="position:absolute;left:1467px;top:371px;width:444px;height:59px;background:#00b180;border-radius:29.5px;"></div>
<div style="position:absolute;left:1500px;top:386.93px;font-size:30.8px;line-height:30.8px;color:#fff;font-weight:400;font-style:normal;letter-spacing:0.8px;white-space:nowrap;-webkit-text-stroke:0.35px #fff;">SUM(Profit)</div>
<svg style="position:absolute;left:1843px;top:385px;" width="36" height="34" viewBox="0 0 36 34"><path d="M18 5L32.2 29.3H3.8Z" fill="none" stroke="#e4faf1" stroke-width="3.7" stroke-linejoin="miter"/></svg>
<svg style="position:absolute;left:1152px;top:276px;" width="36" height="40" viewBox="0 0 36 40"><g fill="#666"><rect x="3" y="2" width="6" height="6"/><rect x="15" y="2" width="6" height="6"/><rect x="27" y="2" width="6" height="6"/><rect x="3" y="11" width="6" height="27"/><rect x="15" y="11" width="6" height="27"/><rect x="27" y="11" width="6" height="27"/></g></svg>
<svg style="position:absolute;left:1150px;top:381px;" width="40" height="36" viewBox="0 0 40 36"><g fill="#666"><rect x="2" y="2" width="6" height="6"/><rect x="12" y="2" width="26" height="6"/><rect x="2" y="14" width="6" height="6"/><rect x="12" y="14" width="26" height="6"/><rect x="2" y="26" width="6" height="6"/><rect x="12" y="26" width="26" height="6"/></g></svg>
<div style="position:absolute;left:1132px;top:461px;width:1253px;height:1307px;background:#ffffff;border:3px solid #d2d2d2;box-sizing:border-box;"></div>
<div style="position:absolute;left:1166.5px;top:507.67px;font-size:63px;line-height:63px;color:#4a4a4a;font-weight:400;font-style:normal;letter-spacing:0.3px;white-space:nowrap;">Sales versus profit by states, 2018</div>
<svg style="position:absolute;left:1132px;top:461px" width="1253" height="1307" viewBox="0 0 1253 1307"><line x1="452.5" y1="144" x2="452.5" y2="1128" stroke="#efefef" stroke-width="2.6"/><line x1="615.5" y1="144" x2="615.5" y2="1128" stroke="#efefef" stroke-width="2.6"/><line x1="780.5" y1="144" x2="780.5" y2="1128" stroke="#efefef" stroke-width="2.6"/><line x1="945" y1="144" x2="945" y2="1128" stroke="#efefef" stroke-width="2.6"/><line x1="1110.5" y1="144" x2="1110.5" y2="1128" stroke="#efefef" stroke-width="2.6"/><line x1="224" y1="244" x2="1212" y2="244" stroke="#efefef" stroke-width="2.6"/><line x1="224" y1="403.20000000000005" x2="1212" y2="403.20000000000005" stroke="#efefef" stroke-width="2.6"/><line x1="224" y1="559.4" x2="1212" y2="559.4" stroke="#efefef" stroke-width="2.6"/><line x1="224" y1="718.5" x2="1212" y2="718.5" stroke="#efefef" stroke-width="2.6"/><line x1="224" y1="877.3" x2="1212" y2="877.3" stroke="#efefef" stroke-width="2.6"/><line x1="224" y1="1033.4" x2="240" y2="1033.4" stroke="#efefef" stroke-width="2.6"/><line x1="288" y1="1114" x2="288" y2="1128" stroke="#efefef" stroke-width="2.6"/><line x1="240.29999999999995" y1="144" x2="240.29999999999995" y2="1115.5" stroke="#efefef" stroke-width="2.7"/><line x1="239" y1="1114.3" x2="1211" y2="1114.3" stroke="#efefef" stroke-width="2.7"/><line x1="288.4000000000001" y1="144" x2="288.4000000000001" y2="1115" stroke="#c8c8c8" stroke-width="2.9" stroke-dasharray="5.8 3.2"/><line x1="242" y1="1033.4" x2="1208" y2="1033.4" stroke="#c8c8c8" stroke-width="2.9" stroke-dasharray="5.8 3.2"/><line x1="699.5" y1="144" x2="699.5" y2="1115" stroke="#a9a9a9" stroke-width="2.7" stroke-dasharray="14.4 3.6"/><line x1="240" y1="640.4000000000001" x2="1208" y2="640.4000000000001" stroke="#a9a9a9" stroke-width="2.7" stroke-dasharray="14.4 3.6"/><circle cx="1072.7" cy="277.3" r="31.7" fill="#6e98c0" fill-opacity="0.86" stroke="#e5e5e5" stroke-width="2.6"/><circle cx="1089.0" cy="261.7" r="39.7" fill="#315f91" fill-opacity="0.86" stroke="#e5e5e5" stroke-width="2.6"/><circle cx="1000.7" cy="293.0" r="16.5" fill="#8fb9db" fill-opacity="0.86" stroke="#e5e5e5" stroke-width="2.6"/><circle cx="929.0" cy="311.6" r="16.2" fill="#98bfe0" fill-opacity="0.86" stroke="#e5e5e5" stroke-width="2.6"/><circle cx="913.6" cy="344.7" r="16.2" fill="#9dc8e2" fill-opacity="0.86" stroke="#e5e5e5" stroke-width="2.6"/><circle cx="878.0" cy="329.6" r="10.2" fill="#9ac3e2" fill-opacity="0.86" stroke="#e5e5e5" stroke-width="2.6"/><circle cx="860.0" cy="363.0" r="14.8" fill="#a7cce7" fill-opacity="0.86" stroke="#e5e5e5" stroke-width="2.6"/><circle cx="788.0" cy="380.7" r="14.3" fill="#aed2e9" fill-opacity="0.86" stroke="#e5e5e5" stroke-width="2.6"/><circle cx="716.0" cy="395.4" r="14.1" fill="#b1d2e4" fill-opacity="0.86" stroke="#e5e5e5" stroke-width="2.6"/><circle cx="805.8" cy="413.7" r="14.1" fill="#b8d4e4" fill-opacity="0.86" stroke="#e5e5e5" stroke-width="2.6"/><circle cx="733.8" cy="431.9" r="14.5" fill="#c1d3de" fill-opacity="0.86" stroke="#e5e5e5" stroke-width="2.6"/><circle cx="680.0" cy="449.8" r="9.9" fill="#c0d6e4" fill-opacity="0.86" stroke="#e5e5e5" stroke-width="2.6"/><circle cx="770.0" cy="464.4" r="12.6" fill="#c1d3de" fill-opacity="0.86" stroke="#e5e5e5" stroke-width="2.6"/><circle cx="751.8" cy="482.4" r="14.0" fill="#c7d6e1" fill-opacity="0.86" stroke="#e5e5e5" stroke-width="2.6"/><circle cx="698.0" cy="501.3" r="13.0" fill="#c4d6e2" fill-opacity="0.86" stroke="#e5e5e5" stroke-width="2.6"/><circle cx="644.0" cy="519.0" r="11.2" fill="#c5d7e2" fill-opacity="0.86" stroke="#e5e5e5" stroke-width="2.6"/><circle cx="626.0" cy="534.6" r="4.9" fill="#c3d5e1" fill-opacity="0.86" stroke="#e5e5e5" stroke-width="2.6"/><circle cx="661.8" cy="551.9" r="8.6" fill="#ccd7e0" fill-opacity="0.86" stroke="#e5e5e5" stroke-width="2.6"/><circle cx="554.0" cy="569.8" r="10.3" fill="#ced5dc" fill-opacity="0.86" stroke="#e5e5e5" stroke-width="2.6"/><circle cx="518.0" cy="585.0" r="10.4" fill="#cfd4d9" fill-opacity="0.86" stroke="#e5e5e5" stroke-width="2.6"/><circle cx="608.2" cy="603.3" r="6.6" fill="#d2d4d9" fill-opacity="0.86" stroke="#e5e5e5" stroke-width="2.6"/><circle cx="499.8" cy="621.0" r="11.5" fill="#d2d5d7" fill-opacity="0.86" stroke="#e5e5e5" stroke-width="2.6"/><circle cx="464.0" cy="638.8" r="8.5" fill="#d4d3d4" fill-opacity="0.86" stroke="#e5e5e5" stroke-width="2.6"/><circle cx="428.0" cy="653.7" r="8.6" fill="#d6d4d5" fill-opacity="0.86" stroke="#e5e5e5" stroke-width="2.6"/><circle cx="481.7" cy="672.0" r="8.6" fill="#d6d4d5" fill-opacity="0.86" stroke="#e5e5e5" stroke-width="2.6"/><circle cx="572.0" cy="705.0" r="5.2" fill="#d9d5d5" fill-opacity="0.86" stroke="#e5e5e5" stroke-width="2.6"/><circle cx="590.0" cy="689.0" r="7.7" fill="#d6d4d5" fill-opacity="0.86" stroke="#e5e5e5" stroke-width="2.6"/><circle cx="375.6" cy="723.5" r="6.7" fill="#d9d5d5" fill-opacity="0.86" stroke="#e5e5e5" stroke-width="2.6"/><circle cx="339.8" cy="740.8" r="6.7" fill="#d9d5d5" fill-opacity="0.86" stroke="#e5e5e5" stroke-width="2.6"/><circle cx="447.0" cy="758.2" r="6.7" fill="#d9d5d5" fill-opacity="0.86" stroke="#e5e5e5" stroke-width="2.6"/><circle cx="321.9" cy="792.0" r="5.1" fill="#dad5d5" fill-opacity="0.86" stroke="#e5e5e5" stroke-width="2.6"/><circle cx="305.1" cy="809.8" r="8.7" fill="#dbd4d4" fill-opacity="0.86" stroke="#e5e5e5" stroke-width="2.6"/><circle cx="357.6" cy="826.6" r="5.3" fill="#dbd4d4" fill-opacity="0.86" stroke="#e5e5e5" stroke-width="2.6"/><circle cx="411.3" cy="843.5" r="5.3" fill="#dbd5d4" fill-opacity="0.86" stroke="#e5e5e5" stroke-width="2.6"/><circle cx="393.3" cy="860.8" r="5.3" fill="#dbd5d4" fill-opacity="0.86" stroke="#e5e5e5" stroke-width="2.6"/><circle cx="286.4" cy="877.8" r="4.7" fill="#dbd5d4" fill-opacity="0.86" stroke="#e5e5e5" stroke-width="2.6"/><circle cx="535.8" cy="896.6" r="13.5" fill="#e7d2cd" fill-opacity="0.86" stroke="#e5e5e5" stroke-width="2.6"/><circle cx="1018.7" cy="773.9" r="24.5" fill="#ddd9d7" fill-opacity="0.86" stroke="#e5e5e5" stroke-width="2.6"/><circle cx="841.9" cy="911.2" r="18.6" fill="#f1c0b6" fill-opacity="0.86" stroke="#e5e5e5" stroke-width="2.6"/><circle cx="823.8" cy="962.8" r="18.6" fill="#faa99a" fill-opacity="0.86" stroke="#e5e5e5" stroke-width="2.6"/><circle cx="895.9" cy="947.4" r="20.2" fill="#faac9e" fill-opacity="0.86" stroke="#e5e5e5" stroke-width="2.6"/><circle cx="947.0" cy="929.5" r="28.7" fill="#f3bdb2" fill-opacity="0.86" stroke="#e5e5e5" stroke-width="2.6"/><circle cx="964.7" cy="980.0" r="20.5" fill="#f89d8c" fill-opacity="0.86" stroke="#e5e5e5" stroke-width="2.6"/><circle cx="982.6" cy="1016.8" r="28.2" fill="#f79a87" fill-opacity="0.86" stroke="#e5e5e5" stroke-width="2.6"/><circle cx="1055.4" cy="1032.8" r="38.9" fill="#f5917e" fill-opacity="0.86" stroke="#e5e5e5" stroke-width="2.6"/><circle cx="1037.0" cy="998.4" r="30.3" fill="#f7a393" fill-opacity="0.86" stroke="#e5e5e5" stroke-width="2.6"/><clipPath id="cb"><circle cx="1109.1" cy="242.5" r="58.1"/></clipPath><circle cx="1109.1" cy="242.5" r="59.4" fill="#5f80a6" stroke="#e5e5e5" stroke-width="2.6"/><g clip-path="url(#cb)"><circle cx="1091.8" cy="258.8" r="40.3" fill="#3e6792"/><circle cx="1076.0" cy="272.0" r="27.5" fill="#37638f"/></g></svg>
<div style="position:absolute;left:1679.5px;top:626px;width:138.5px;height:119.60000000000002px;background:rgba(247,247,247,0.92);"></div>
<div style="position:absolute;left:1726.6px;top:670.23px;font-size:36px;line-height:36px;color:#333;font-weight:400;font-style:normal;white-space:nowrap;">LH</div>
<div style="position:absolute;left:1836px;top:623.5px;width:122.70000000000005px;height:112.5px;background:rgba(247,247,247,0.92);"></div>
<div style="position:absolute;left:1867px;top:664.23px;font-size:36px;line-height:36px;color:#333;font-weight:400;font-style:normal;white-space:nowrap;">HH</div>
<div style="position:absolute;left:1707px;top:1104.6px;width:108px;height:105.40000000000009px;background:rgba(247,247,247,0.92);"></div>
<div style="position:absolute;left:1742.5px;top:1141.53px;font-size:36px;line-height:36px;color:#333;font-weight:400;font-style:normal;white-space:nowrap;">LL</div>
<div style="position:absolute;left:1833px;top:1104.6px;width:111px;height:105.40000000000009px;background:rgba(247,247,247,0.92);"></div>
<div style="position:absolute;left:1865.6px;top:1141.53px;font-size:36px;line-height:36px;color:#333;font-weight:400;font-style:normal;white-space:nowrap;">HL</div>
<div style="position:absolute;left:2158.6px;top:777.83px;font-size:36px;line-height:36px;color:#262626;font-weight:400;font-style:normal;letter-spacing:1px;white-space:nowrap;">California</div>
<div style="position:absolute;left:1724.2px;top:934.53px;font-size:36px;line-height:36px;color:#262626;font-weight:400;font-style:normal;letter-spacing:0.25px;white-space:nowrap;">Oklahoma</div>
<div style="position:absolute;left:1375.7px;top:1309.73px;font-size:36px;line-height:36px;color:#262626;font-weight:400;font-style:normal;letter-spacing:1.2px;white-space:nowrap;">North Dakota</div>
<div style="position:absolute;left:2136.5px;top:1527.53px;font-size:36px;line-height:36px;color:#262626;font-weight:400;font-style:normal;white-space:nowrap;">Texas</div>
<div style="position:absolute;left:1381.7px;top:1054.53px;font-size:36px;line-height:36px;color:#555;font-weight:400;font-style:normal;white-space:nowrap;">50.0%</div>
<div style="position:absolute;left:1840px;top:1528.53px;font-size:36px;line-height:36px;color:#555;font-weight:400;font-style:normal;white-space:nowrap;">50.0%</div>
<div style="position:absolute;right:1540px;top:688.93px;font-size:36px;line-height:36px;color:#777;font-weight:400;font-style:normal;letter-spacing:0.6px;white-space:nowrap;">100%</div>
<div style="position:absolute;right:1540px;top:848.13px;font-size:36px;line-height:36px;color:#777;font-weight:400;font-style:normal;letter-spacing:0.6px;white-space:nowrap;">80%</div>
<div style="position:absolute;right:1540px;top:1004.33px;font-size:36px;line-height:36px;color:#777;font-weight:400;font-style:normal;letter-spacing:0.6px;white-space:nowrap;">60%</div>
<div style="position:absolute;right:1540px;top:1163.43px;font-size:36px;line-height:36px;color:#777;font-weight:400;font-style:normal;letter-spacing:0.6px;white-space:nowrap;">40%</div>
<div style="position:absolute;right:1540px;top:1322.23px;font-size:36px;line-height:36px;color:#777;font-weight:400;font-style:normal;letter-spacing:0.6px;white-space:nowrap;">20%</div>
<div style="position:absolute;right:1540px;top:1478.33px;font-size:36px;line-height:36px;color:#777;font-weight:400;font-style:normal;letter-spacing:0.6px;white-space:nowrap;">0%</div>
<div style="position:absolute;left:1420px;transform:translateX(-50%);top:1603.53px;font-size:36px;line-height:36px;color:#777;font-weight:400;font-style:normal;letter-spacing:0.6px;white-space:nowrap;">0%</div>
<div style="position:absolute;left:1584.5px;transform:translateX(-50%);top:1603.53px;font-size:36px;line-height:36px;color:#777;font-weight:400;font-style:normal;letter-spacing:0.6px;white-space:nowrap;">20%</div>
<div style="position:absolute;left:1747.5px;transform:translateX(-50%);top:1603.53px;font-size:36px;line-height:36px;color:#777;font-weight:400;font-style:normal;letter-spacing:0.6px;white-space:nowrap;">40%</div>
<div style="position:absolute;left:1912.5px;transform:translateX(-50%);top:1603.53px;font-size:36px;line-height:36px;color:#777;font-weight:400;font-style:normal;letter-spacing:0.6px;white-space:nowrap;">60%</div>
<div style="position:absolute;left:2077px;transform:translateX(-50%);top:1603.53px;font-size:36px;line-height:36px;color:#777;font-weight:400;font-style:normal;letter-spacing:0.6px;white-space:nowrap;">80%</div>
<div style="position:absolute;left:2242.5px;transform:translateX(-50%);top:1603.53px;font-size:36px;line-height:36px;color:#777;font-weight:400;font-style:normal;letter-spacing:0.6px;white-space:nowrap;">100%</div>
<div style="position:absolute;left:1700px;top:1675.33px;font-size:36px;line-height:36px;color:#333;font-weight:400;font-style:normal;letter-spacing:0.6px;white-space:nowrap;-webkit-text-stroke:0.5px #333;">Percentile of Sales</div>
<div style="position:absolute;left:1208.5px;top:1245.5px;transform-origin:0 0;transform:rotate(-90deg);font-size:36px;line-height:0;color:#333;white-space:nowrap;letter-spacing:1.35px;-webkit-text-stroke:0.5px #333;">Percentile of Profit</div>
<div style="position:absolute;left:2403px;top:461px;width:463px;height:456px;background:#ffffff;border:3px solid #d2d2d2;box-sizing:border-box;"></div>
<div style="position:absolute;left:2406px;top:464px;width:457px;height:87px;background:#f8f8f8;"></div>
<div style="position:absolute;left:2424px;top:492.34px;font-size:31.5px;line-height:31.5px;color:#333;font-weight:400;font-style:normal;white-space:nowrap;">SUM(Quantity)</div>
<svg style="position:absolute;left:2403px;top:461px;" width="300" height="456" viewBox="0 0 300 456"><circle cx="75" cy="120" r="6" fill="#b8b8b8"/><clipPath id="sl0"><rect x="0" y="153" width="300" height="53.5"/></clipPath><circle cx="75" cy="180" r="25.2" fill="#d6d6d6" stroke="#b4b4b4" stroke-width="4" clip-path="url(#sl0)"/><clipPath id="sl1"><rect x="0" y="213" width="300" height="53.5"/></clipPath><circle cx="75" cy="240" r="37" fill="#d6d6d6" stroke="#b4b4b4" stroke-width="4" clip-path="url(#sl1)"/><clipPath id="sl2"><rect x="0" y="273" width="300" height="53.5"/></clipPath><circle cx="75" cy="300" r="46" fill="#d6d6d6" stroke="#b4b4b4" stroke-width="4" clip-path="url(#sl2)"/><clipPath id="sl3"><rect x="0" y="333" width="300" height="53.5"/></clipPath><circle cx="75" cy="360" r="52" fill="#d6d6d6" stroke="#b4b4b4" stroke-width="4" clip-path="url(#sl3)"/><clipPath id="sl4"><rect x="0" y="393" width="300" height="53.5"/></clipPath><circle cx="75" cy="420" r="61" fill="#d6d6d6" stroke="#b4b4b4" stroke-width="4" clip-path="url(#sl4)"/></svg>
<div style="position:absolute;right:240.4000000000001px;top:563.68px;font-size:37px;line-height:37px;color:#333;font-weight:400;font-style:normal;white-space:nowrap;">8</div>
<div style="position:absolute;right:240.4000000000001px;top:624.68px;font-size:37px;line-height:37px;color:#333;font-weight:400;font-style:normal;white-space:nowrap;">500</div>
<div style="position:absolute;right:240.4000000000001px;top:684.18px;font-size:37px;line-height:37px;color:#333;font-weight:400;font-style:normal;white-space:nowrap;">1,000</div>
<div style="position:absolute;right:240.4000000000001px;top:743.68px;font-size:37px;line-height:37px;color:#333;font-weight:400;font-style:normal;white-space:nowrap;">1,500</div>
<div style="position:absolute;right:240.4000000000001px;top:803.68px;font-size:37px;line-height:37px;color:#333;font-weight:400;font-style:normal;white-space:nowrap;">2,000</div>
<div style="position:absolute;right:240.4000000000001px;top:864.68px;font-size:37px;line-height:37px;color:#333;font-weight:400;font-style:normal;white-space:nowrap;">2,622</div>
<div style="position:absolute;left:2403px;top:935px;width:463px;height:213px;background:#ffffff;border:3px solid #d2d2d2;box-sizing:border-box;"></div>
<div style="position:absolute;left:2406px;top:938px;width:457px;height:87px;background:#f8f8f8;"></div>
<div style="position:absolute;left:2424px;top:966.84px;font-size:31.5px;line-height:31.5px;color:#333;font-weight:400;font-style:normal;white-space:nowrap;">SUM(Profit)</div>
<div style="position:absolute;left:2416px;top:1036px;width:434px;height:48px;background:linear-gradient(90deg,#f8826a 0%,#fba592 13%,#fbb9aa 20%,#dedad8 24%,#a9d0e8 30%,#8ebbdc 45%,#6c9cc4 62%,#5583b0 78%,#3b5f8c 100%);border:3px solid #a9a49c;box-sizing:border-box;"></div>
<div style="position:absolute;left:2515.5px;top:1077px;width:3.0px;height:14px;background:#111;"></div>
<div style="position:absolute;left:2418.5px;top:1094.76px;font-size:37.5px;line-height:37.5px;color:#333;font-weight:400;font-style:normal;white-space:nowrap;">-8,712</div>
<div style="position:absolute;right:43.40000000000009px;top:1094.76px;font-size:37.5px;line-height:37.5px;color:#333;font-weight:400;font-style:normal;white-space:nowrap;">29,181</div>
<div style="position:absolute;left:3px;top:1787px;width:2880px;height:2px;background:#d0d0d0;"></div>
<div style="position:absolute;left:3px;top:1789px;width:2880px;height:88px;background:#e6e6e6;"></div>
<div style="position:absolute;left:3px;top:1877px;width:2880px;height:3px;background:#d0d0d0;"></div>
<div style="position:absolute;left:395px;top:1789px;width:279px;height:88px;background:#f7f7f7;"></div>
<div style="position:absolute;left:393px;top:1789px;width:2.5px;height:88px;background:#c8c8c8;"></div>
<div style="position:absolute;left:674px;top:1789px;width:2.5px;height:88px;background:#c8c8c8;"></div>
<div style="position:absolute;left:825px;top:1789px;width:2.5px;height:88px;background:#c8c8c8;"></div>
<div style="position:absolute;left:920.5px;top:1789px;width:2.5px;height:88px;background:#c8c8c8;"></div>
<div style="position:absolute;left:1016.5px;top:1789px;width:2.5px;height:88px;background:#c8c8c8;"></div>
<div style="position:absolute;left:1112.5px;top:1789px;width:2.5px;height:88px;background:#c8c8c8;"></div>
<svg style="position:absolute;left:30px;top:1814px;" width="30" height="38" viewBox="0 0 30 38"><g fill="none" stroke="#666" stroke-width="2.4"><ellipse cx="14.5" cy="6.5" rx="11.5" ry="4.5"/><path d="M3 6.5V29Q3 33.5 14.5 33.5Q26 33.5 26 29V6.5"/></g></svg>
<div style="position:absolute;left:76px;top:1820.61px;font-size:30px;line-height:30px;color:#555;font-weight:400;font-style:normal;white-space:nowrap;">Data Source</div>
<div style="position:absolute;left:415.6px;top:1817.20px;font-size:30px;line-height:30px;color:#444;font-weight:700;font-style:normal;white-space:nowrap;">Quadrat analysis</div>
<div style="position:absolute;left:693.5px;top:1820.61px;font-size:30px;line-height:30px;color:#555;font-weight:400;font-style:normal;white-space:nowrap;">Sheet 2</div>
<svg style="position:absolute;left:852px;top:1811px;" width="50" height="50" viewBox="0 0 50 50"><g fill="none" stroke="#666" stroke-width="2.6"><path d="M34.5 20.5V4.5H4.5V34H20.5"/></g>
<rect x="11" y="21" width="3" height="6" fill="#666"/><rect x="18" y="12" width="3" height="15" fill="#666"/><rect x="26" y="17" width="3" height="10" fill="#666"/>
<path d="M37 26V47M26.5 36.5H47" stroke="#666" stroke-width="5.6"/></svg>
<svg style="position:absolute;left:948px;top:1811px;" width="50" height="50" viewBox="0 0 50 50"><g fill="none" stroke="#666" stroke-width="2.6"><path d="M35 20.5V4.5H4.5V34H20.5M19.5 4.5V34M4.5 19.5H35"/></g>
<path d="M37 26V47M26.5 36.5H47" stroke="#666" stroke-width="5.6"/></svg>
<svg style="position:absolute;left:1044px;top:1811px;" width="50" height="50" viewBox="0 0 50 50"><g fill="none" stroke="#666" stroke-width="2.6" stroke-linejoin="miter"><path d="M4.5 4V32L19.5 37V11L4.5 4M19.5 11L34.5 5V21"/></g>
<path d="M36.5 26V47M26 36.5H47" stroke="#666" stroke-width="5.6"/></svg>
<div style="position:absolute;left:3px;top:1880px;width:2880px;height:58px;background:#ececec;"></div>
<div style="position:absolute;left:12.3px;top:1896.55px;font-size:27.7px;line-height:27.7px;color:#222;font-weight:400;font-style:normal;white-space:nowrap;">47 marks</div>
<div style="position:absolute;left:170px;top:1896.55px;font-size:27.7px;line-height:27.7px;color:#222;font-weight:400;font-style:normal;letter-spacing:-0.5px;white-space:nowrap;">1 row by 1 column</div>
<div style="position:absolute;left:430px;top:1896.55px;font-size:27.7px;line-height:27.7px;color:#222;font-weight:400;font-style:normal;white-space:nowrap;">Percentile of SUM(Sales): 2,350.0%</div>
<div style="position:absolute;left:1782px;top:1880px;width:2.5px;height:58px;background:#cfcfcf;"></div>
<div style="position:absolute;left:2163px;top:1880px;width:2.5px;height:58px;background:#cfcfcf;"></div>
<div style="position:absolute;left:2244px;top:1880px;width:2.5px;height:58px;background:#cfcfcf;"></div>
<div style="position:absolute;left:2326px;top:1880px;width:2.5px;height:58px;background:#cfcfcf;"></div>
<div style="position:absolute;left:2467px;top:1880px;width:2.5px;height:58px;background:#cfcfcf;"></div>
<div style="position:absolute;left:2680px;top:1880px;width:2.5px;height:58px;background:#cfcfcf;"></div>
<svg style="position:absolute;left:2490px;top:1895px;" width="170" height="28" viewBox="0 0 170 28"><rect x="3" y="3" width="3" height="21" fill="#bdbdbd"/><path d="M21 3V24L9.5 13.5Z" fill="#bdbdbd"/>
<path d="M66 3V24L54.5 13.5Z" fill="#bdbdbd"/><path d="M102 3V24L113.7 13.5Z" fill="#bdbdbd"/>
<path d="M147 3V24L158.6 13.5Z" fill="#bdbdbd"/><rect x="161.7" y="3" width="3" height="21" fill="#bdbdbd"/></svg>
<svg style="position:absolute;left:2708px;top:1894px;" width="34" height="34" viewBox="0 0 34 34"><rect x="0" y="0" width="9" height="9" fill="#bdbdbd"/><rect x="0" y="12" width="9" height="9" fill="#bdbdbd"/><rect x="0" y="24" width="9" height="9" fill="#bdbdbd"/><rect x="12" y="0" width="9" height="9" fill="#bdbdbd"/><rect x="12" y="12" width="9" height="9" fill="#bdbdbd"/><rect x="12" y="24" width="9" height="9" fill="#bdbdbd"/><rect x="24" y="0" width="9" height="9" fill="#bdbdbd"/><rect x="24" y="12" width="9" height="9" fill="#bdbdbd"/><rect x="24" y="24" width="9" height="9" fill="#bdbdbd"/></svg>
<svg style="position:absolute;left:2771px;top:1894px;" width="34" height="34" viewBox="0 0 34 34"><rect x="0" y="0" width="33" height="20.5" fill="#bdbdbd"/><rect x="0" y="24" width="9" height="9" fill="#bdbdbd"/><rect x="12" y="24" width="9" height="9" fill="#bdbdbd"/><rect x="24" y="24" width="9" height="9" fill="#bdbdbd"/></svg>
<div style="position:absolute;left:2834px;top:1894px;width:33px;height:33px;background:#646464;"></div>
</body></html>
